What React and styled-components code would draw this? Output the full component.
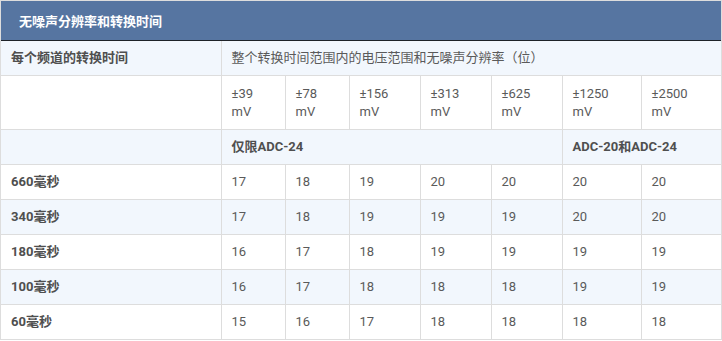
import React from "react";
import styled, { createGlobalStyle } from "styled-components";

const GlobalStyle = createGlobalStyle`
  html, body {
    margin: 0;
    padding: 0;
    background: #fff;
  }
  body {
    font-family: Roboto, "Noto Sans CJK SC", sans-serif;
  }
`

const Wrapper = styled.div`
  width: 722px;
  box-sizing: border-box;
  border: 1px solid #dddddd;
  border-bottom: none;
`

const TitleBar = styled.div`
  height: 39px;
  display: flex;
  align-items: center;
  padding: 0 18px;
  background-color: #5675a1;
  border-bottom: 1px solid #1e2228;
  color: #ffffff;
  font-size: 13px;
  font-weight: bold;
`

const Table = styled.table`
  width: 720px;
  border-collapse: collapse;
  table-layout: fixed;
  font-size: 13px;
  color: #555;
`

const Row = styled.tr`
  background-color: ${(p) => (p.$tint ? "#f2f7fd" : "#ffffff")};
`

const Cell = styled.td`
  padding: ${(p) => (p.$tall ? "9px 10px 8px" : "8px 10px")};
  line-height: 18px;
  border: 1px solid #dddddd;
  vertical-align: top;
  font-weight: ${(p) => (p.$bold ? "bold" : "normal")};
  color: ${(p) => (p.$bold ? "#4f4f4f" : "#5a5a5a")};
  &:first-child {
    border-left: none;
  }
  &:last-child {
    border-right: none;
  }
  tr:first-child > & {
    border-top: none;
  }
`

const widths = [220, 64, 64, 71, 71, 71, 79, 80];
const ranges = ["39", "78", "156", "313", "625", "1250", "2500"];

const rows = [
  { time: "660毫秒", values: [17, 18, 19, 20, 20, 20, 20] },
  { time: "340毫秒", values: [17, 18, 19, 19, 19, 20, 20] },
  { time: "180毫秒", values: [16, 17, 18, 19, 19, 19, 19] },
  { time: "100毫秒", values: [16, 17, 18, 18, 18, 19, 19] },
  { time: "60毫秒", values: [15, 16, 17, 18, 18, 18, 18] },
];

const App = () => {
  return (
    <Wrapper>
      <GlobalStyle />
      <TitleBar>无噪声分辨率和转换时间</TitleBar>
      <Table>
        <colgroup>
          {widths.map((w, i) => (
            <col key={i} style={{ width: w }} />
          ))}
        </colgroup>
        <tbody>
          <Row $tint>
            <Cell $bold>每个频道的转换时间</Cell>
            <Cell colSpan={7}>整个转换时间范围内的电压范围和无噪声分辨率（位）</Cell>
          </Row>
          <Row>
            <Cell $tall />
            {ranges.map((r) => (
              <Cell key={r} $tall>
                ±{r}
                <br />
                mV
              </Cell>
            ))}
          </Row>
          <Row $tint>
            <Cell />
            <Cell $bold colSpan={5}>仅限ADC-24</Cell>
            <Cell $bold colSpan={2}>ADC-20和ADC-24</Cell>
          </Row>
          {rows.map((row, i) => (
            <Row key={row.time} $tint={i % 2 === 1}>
              <Cell $bold>{row.time}</Cell>
              {row.values.map((v, j) => (
                <Cell key={j}>{v}</Cell>
              ))}
            </Row>
          ))}
        </tbody>
      </Table>
    </Wrapper>
  );
};

export default App;
